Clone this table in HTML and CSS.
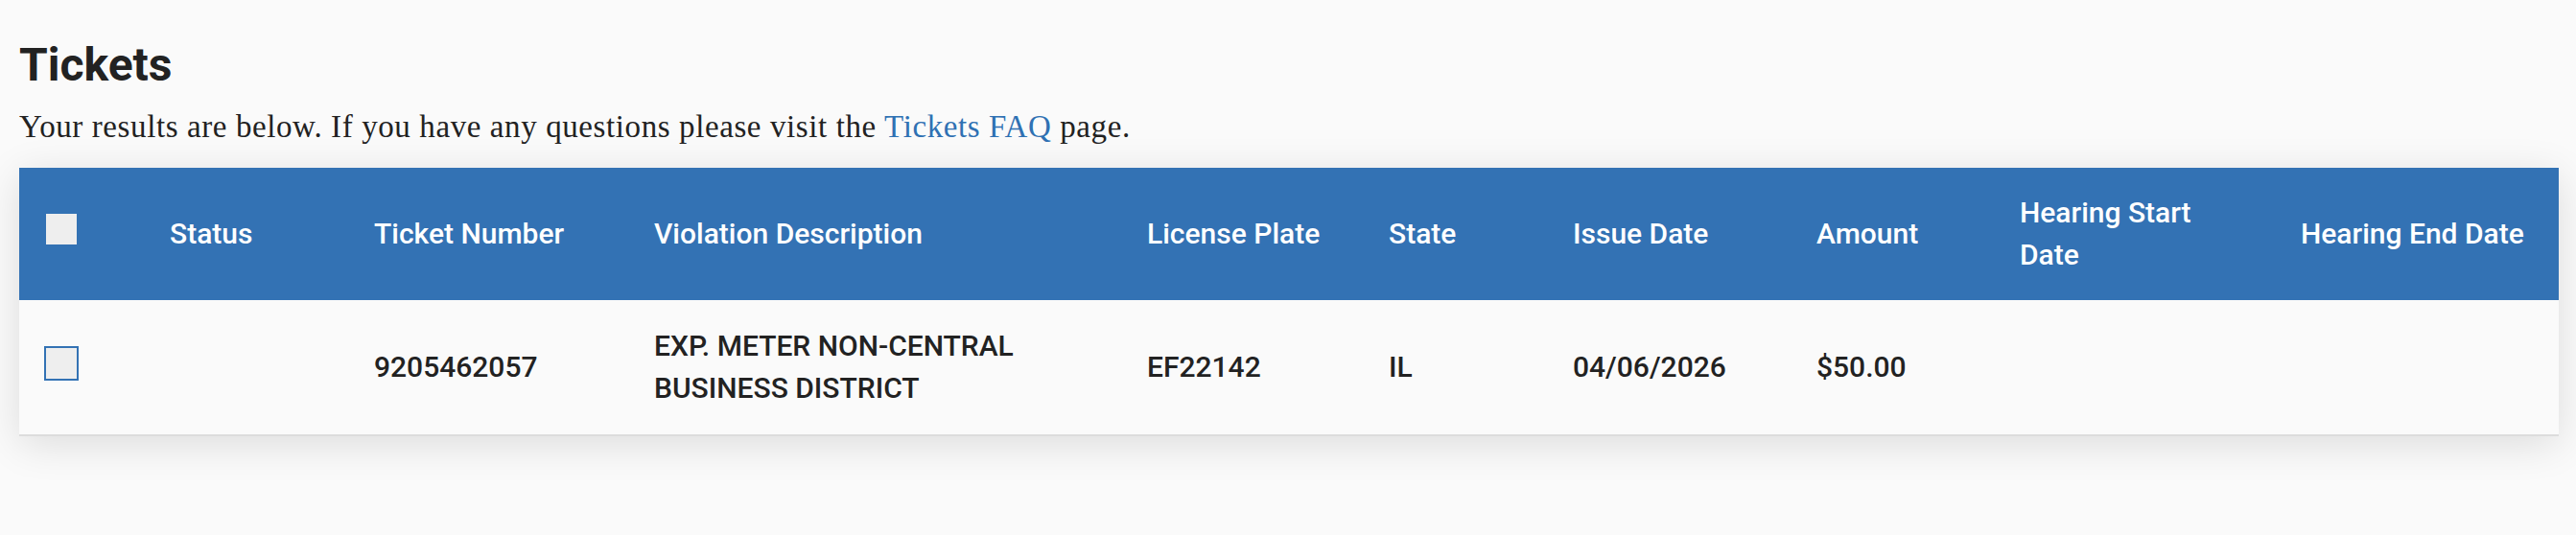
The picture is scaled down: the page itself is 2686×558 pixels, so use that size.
FILE: index.html
```html
<!DOCTYPE html>
<html lang="en">
<head>
  <meta charset="UTF-8"/>
  <meta name="viewport" content="width=device-width,initial-scale=1"/>
  <title>Tickets</title>
  <link rel="stylesheet" href="styles.css">
</head>
<body>
  <main class="page">
    <h1 class="title">Tickets</h1>
    <p class="intro">Your results are below. If you have any questions please visit the <a href="#">Tickets FAQ</a> page.</p>

    <!-- results table -->
    <div class="results">
      <table class="tickets">
        <colgroup>
          <col class="c-check">
          <col class="c-status">
          <col class="c-number">
          <col class="c-desc">
          <col class="c-plate">
          <col class="c-state">
          <col class="c-issue">
          <col class="c-amount">
          <col class="c-hstart">
          <col class="c-hend">
        </colgroup>
        <thead>
          <tr>
            <th class="cell-check"><input type="checkbox" class="check check-all" aria-label="Select all"></th>
            <th>Status</th>
            <th>Ticket Number</th>
            <th>Violation Description</th>
            <th>License Plate</th>
            <th>State</th>
            <th>Issue Date</th>
            <th>Amount</th>
            <th class="th-wrap">Hearing Start Date</th>
            <th>Hearing End Date</th>
          </tr>
        </thead>
        <tbody>
          <tr>
            <td class="cell-check"><input type="checkbox" class="check" aria-label="Select ticket 9205462057"></td>
            <td></td>
            <td>9205462057</td>
            <td>EXP. METER NON-CENTRAL BUSINESS DISTRICT</td>
            <td>EF22142</td>
            <td>IL</td>
            <td>04/06/2026</td>
            <td>$50.00</td>
            <td></td>
            <td></td>
          </tr>
        </tbody>
      </table>
    </div>
  </main>
</body>
</html>
```

FILE: styles.css
```css
body { margin: 0; background: #fafafa; color: #222; font-family: Roboto, "Liberation Sans", sans-serif; }
.page { padding: 0 18px 60px 20px; }

.title { margin: 39px 0 0; font-size: 48px; line-height: 58px; font-weight: 700; color: #222; }
.intro {
  margin: 11px 0 0; font-family: "Liberation Serif", serif;
  font-size: 33px; line-height: 48px; letter-spacing: 0.6px; color: #222;
}
.intro a { color: #2f71b3; text-decoration: none; }

.results {
  margin-top: 19px; background: #fafafa;
  border-bottom: 2px solid #dcdcdc;
  box-shadow: 0 8px 40px rgba(0, 0, 0, 0.12);
}
.tickets {
  width: 100%; border-collapse: collapse; table-layout: fixed;
  font-size: 30px; line-height: 44px; font-weight: 500;
}
.tickets th {
  background: #3372b4; color: #fff; height: 138px;
  padding: 0 12px; text-align: left; font-weight: 500; vertical-align: middle;
}
.tickets td {
  background: #fafafa; color: #222; height: 140px;
  padding: 0 12px; vertical-align: middle;
}
.tickets .th-wrap { padding-right: 80px; }
.tickets .cell-check { padding-left: 26px; }

.c-check  { width: 145px; }
.c-status { width: 213px; }
.c-number { width: 292px; }
.c-desc   { width: 514px; }
.c-plate  { width: 252px; }
.c-state  { width: 192px; }
.c-issue  { width: 254px; }
.c-amount { width: 212px; }
.c-hstart { width: 293px; }
.c-hend   { width: 281px; }

.check {
  -webkit-appearance: none; appearance: none; display: block;
  box-sizing: border-box; width: 36px; height: 36px; margin: 0 0 8px;
  background: #eee; border: 2px solid #3372b4; border-radius: 0; cursor: pointer;
}
.check-all { width: 32px; height: 32px; margin: 0 2px 10px; border: 0; }
```
